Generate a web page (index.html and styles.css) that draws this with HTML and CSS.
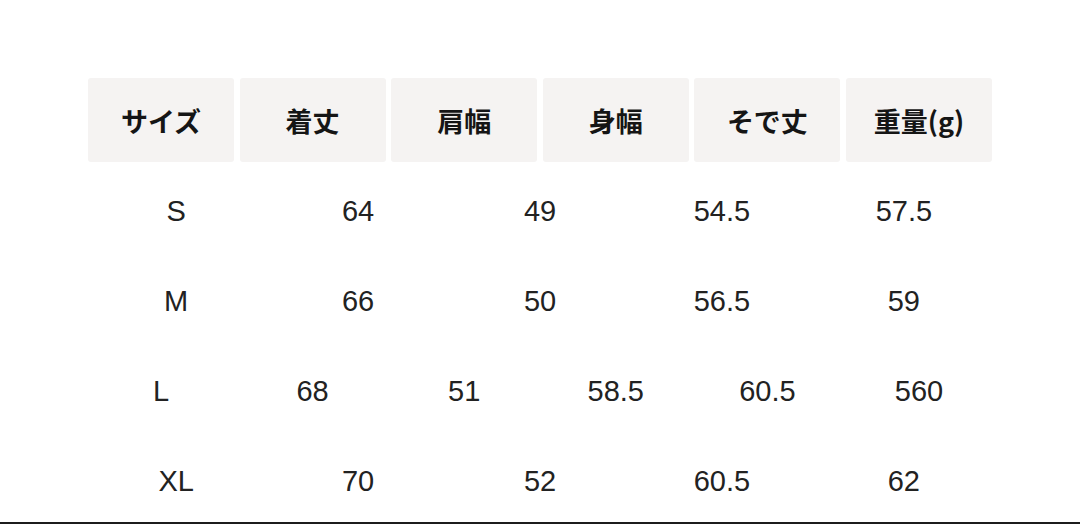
FILE: index.html
```html
<!DOCTYPE html>
<html lang="ja">
<head>
<meta charset="utf-8">
<link rel="stylesheet" href="styles.css">
</head>
<body>
<div class="page">
  <div class="table">
    <div class="row head">
      <div class="cell">サイズ</div>
      <div class="cell">着丈</div>
      <div class="cell">肩幅</div>
      <div class="cell">身幅</div>
      <div class="cell">そで丈</div>
      <div class="cell">重量(g)</div>
    </div>
    <div class="row data">
      <div class="cell">S</div>
      <div class="cell">64</div>
      <div class="cell">49</div>
      <div class="cell">54.5</div>
      <div class="cell">57.5</div>
    </div>
    <div class="row data">
      <div class="cell">M</div>
      <div class="cell">66</div>
      <div class="cell">50</div>
      <div class="cell">56.5</div>
      <div class="cell">59</div>
    </div>
    <div class="row data">
      <div class="cell">L</div>
      <div class="cell">68</div>
      <div class="cell">51</div>
      <div class="cell">58.5</div>
      <div class="cell">60.5</div>
      <div class="cell">560</div>
    </div>
    <div class="row data">
      <div class="cell">XL</div>
      <div class="cell">70</div>
      <div class="cell">52</div>
      <div class="cell">60.5</div>
      <div class="cell">62</div>
    </div>
  </div>
</div>
</body>
</html>
```

FILE: styles.css
```css
html, body {
  margin: 0;
  padding: 0;
  background: #ffffff;
}

.page {
  box-sizing: border-box;
  height: 524px;
  padding: 78px 88px 0 88px;
  border-bottom: 2px solid #1c1c1c;
  overflow: hidden;
}

.table {
  width: 904px;
  display: flex;
  flex-direction: column;
}

.row {
  display: flex;
  gap: 5.6px;
}

.head {
  margin-bottom: 4px;
}

.cell {
  flex: 1 1 0;
  display: flex;
  align-items: center;
  justify-content: center;
}

.head .cell {
  height: 84px;
  background: #f5f3f2;
  border-radius: 3px;
  font-family: "Noto Sans CJK JP", "Noto Sans", sans-serif;
  font-weight: 700;
  font-size: 27px;
  color: #151515;
}

.data .cell {
  height: 90px;
  font-family: "Liberation Sans", Arial, sans-serif;
  font-size: 29px;
  color: #222222;
}
```
